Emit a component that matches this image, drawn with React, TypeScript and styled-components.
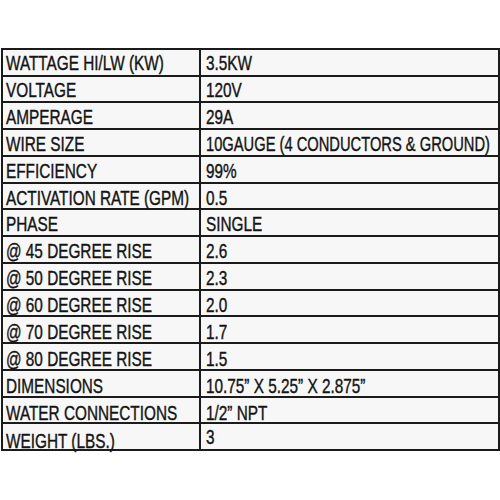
import styled, { createGlobalStyle } from "styled-components";

const GlobalStyle = createGlobalStyle`
    html, body {
        margin: 0;
        padding: 0;
        background: #ffffff;
    }
`;

const Page = styled.div`
    width: 500px;
    height: 500px;
    padding-top: 48px;
    padding-left: 1px;
    box-sizing: border-box;
`;

const SpecGrid = styled.div`
    width: 499px;
    height: 403px;
    box-sizing: border-box;
    display: grid;
    grid-template-columns: 196px minmax(0, 1fr);
    grid-template-rows: repeat(15, 1fr);
    gap: 2px;
    padding: 2px;
    background: #1b1b1b;
    font-family: "Liberation Sans", Arial, sans-serif;
    font-size: 21px;
    color: #141414;
`;

const Cell = styled.div<{ $value?: boolean; $shift: number; $squeeze?: number }>`
    background: #f7f7f7;
    display: flex;
    align-items: center;
    min-width: 0;
    padding-left: ${(p) => (p.$value ? 5 : 3)}px;
    line-height: 1;
    white-space: nowrap;
    span {
        display: inline-block;
        position: relative;
        top: ${(p) => p.$shift}px;
        transform: scaleX(${(p) => p.$squeeze ?? 0.73});
        transform-origin: left center;
        -webkit-text-stroke: 0.4px #141414;
    }
`;

type Row = {
    label: string;
    value: string;
    labelShift?: number;
    valueShift?: number;
    squeeze?: number;
};

const rows: Row[] = [
    { label: "WATTAGE HI/LW (KW)", value: "3.5KW" },
    { label: "VOLTAGE", value: "120V" },
    { label: "AMPERAGE", value: "29A" },
    { label: "WIRE SIZE", value: "10GAUGE (4 CONDUCTORS & GROUND)", squeeze: 0.7 },
    { label: "EFFICIENCY", value: "99%" },
    { label: "ACTIVATION RATE (GPM)", value: "0.5" },
    { label: "PHASE", value: "SINGLE" },
    { label: "@ 45 DEGREE RISE", value: "2.6" },
    { label: "@ 50 DEGREE RISE", value: "2.3" },
    { label: "@ 60 DEGREE RISE", value: "2.0" },
    { label: "@ 70 DEGREE RISE", value: "1.7" },
    { label: "@ 80 DEGREE RISE", value: "1.5" },
    { label: "DIMENSIONS", value: "10.75\u201D X 5.25\u201D X 2.875\u201D" },
    { label: "WATER CONNECTIONS", value: "1/2\u201D NPT" },
    { label: "WEIGHT (LBS.)", value: "3", labelShift: 4, valueShift: 0 },
];

const App = () => {
    return (
        <>
            <GlobalStyle />
            <Page>
                <SpecGrid>
                    {rows.map((r, i) => {
                        const drift = i * 0.2;
                        return [
                            <Cell key={r.label} $shift={r.labelShift ?? drift}>
                                <span>{r.label}</span>
                            </Cell>,
                            <Cell
                                key={r.label + "-v"}
                                $value
                                $shift={r.valueShift ?? drift}
                                $squeeze={r.squeeze}>
                                <span>{r.value}</span>
                            </Cell>,
                        ];
                    })}
                </SpecGrid>
            </Page>
        </>
    );
};

export default App;
